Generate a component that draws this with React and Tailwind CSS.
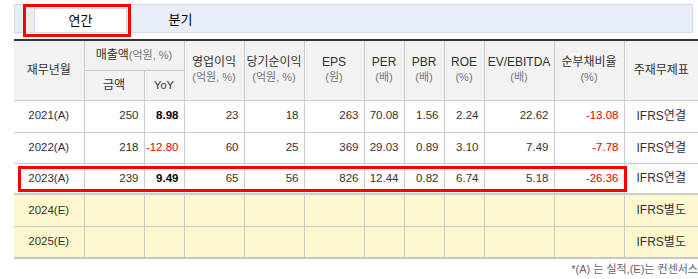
import React from "react";

const cols = [70, 60, 40, 60, 60, 60, 40, 40, 40, 70, 70, 74];

const rows = [
  { period: "2021(A)", sales: "250", yoy: "8.98", op: "23", net: "18", eps: "263", per: "70.08", pbr: "1.56", roe: "2.24", ev: "22.62", debt: "-13.08", kind: "IFRS연결", h: "h-[32px]" },
  { period: "2022(A)", sales: "218", yoy: "-12.80", op: "60", net: "25", eps: "369", per: "29.03", pbr: "0.89", roe: "3.10", ev: "7.49", debt: "-7.78", kind: "IFRS연결", h: "h-[31px]" },
  { period: "2023(A)", sales: "239", yoy: "9.49", op: "65", net: "56", eps: "826", per: "12.44", pbr: "0.82", roe: "6.74", ev: "5.18", debt: "-26.36", kind: "IFRS연결", h: "h-[31px]" },
];

const estimates = ["2024(E)", "2025(E)"];

function Num({ value, bold }) {
  const neg = value.startsWith("-");
  return (
    <td
      className={`border border-[#cccccc] text-right pr-[5px] text-[11.5px] ${
        neg ? "text-[#e60000]" : bold ? "text-black font-bold" : "text-[#333]"
      }`}
    >
      {value}
    </td>
  );
}

function Head({ title, unit, rowSpan = 2 }) {
  return (
    <th rowSpan={rowSpan} className="border border-[#cccccc] font-normal text-[#333] text-[12px] leading-[15px]">
      <div>{title}</div>
      {unit && <div className="text-[11px] text-[#777]">{unit}</div>}
    </th>
  );
}

export default function App() {
  return (
    <div
      className="w-[698px] h-[279px] overflow-hidden bg-white pt-[4px] pl-[14px] relative"
      style={{ fontFamily: "'Liberation Sans', 'Noto Sans CJK KR', sans-serif" }}
    >
      {/* tabs */}
      <div className="w-[679px] h-[29px] bg-[#e8eef8] border border-[#d3dbe8] flex items-end pl-[19px]">
        <div className="w-[93px] h-[24px] bg-white border border-b-0 border-[#cfd8e6] flex items-center justify-center text-[13px] text-black">
          연간
        </div>
        <div className="w-[107px] h-[24px] flex items-center justify-center text-[13px] text-black">분기</div>
      </div>
      <div className="absolute left-[23px] top-[4px] w-[108px] h-[33px] border-[3px] border-[#ff0000]" />

      <div className="relative mt-[6px]">
        <table className="table-fixed border-collapse w-[684px] border-t-2 border-t-[#333]">
          <colgroup>
            {cols.map((w, i) => (
              <col key={i} style={{ width: w }} />
            ))}
          </colgroup>
          <thead className="bg-[#f2f2f2]">
            <tr className="h-[30px]">
              <th rowSpan={2} className="border border-l-0 border-[#cccccc] font-normal text-[#333] text-[12px]">
                재무년월
              </th>
              <th colSpan={2} className="border border-[#cccccc] font-normal text-[#333] text-[12px]">
                매출액<span className="text-[11px] text-[#777]">(억원, %)</span>
              </th>
              <Head title="영업이익" unit="(억원, %)" />
              <Head title="당기순이익" unit="(억원, %)" />
              <Head title="EPS" unit="(원)" />
              <Head title="PER" unit="(배)" />
              <Head title="PBR" unit="(배)" />
              <Head title="ROE" unit="(%)" />
              <Head title="EV/EBITDA" unit="(배)" />
              <Head title="순부채비율" unit="(%)" />
              <th rowSpan={2} className="border border-r-0 border-[#cccccc] font-normal text-[#333] text-[12px]">
                주재무제표
              </th>
            </tr>
            <tr className="h-[30px]">
              <th className="border border-[#cccccc] font-normal text-[#333] text-[12px]">금액</th>
              <th className="border border-[#cccccc] font-normal text-[#333] text-[11px]">YoY</th>
            </tr>
          </thead>
          <tbody>
            {rows.map((r) => (
              <tr key={r.period} className={r.h}>
                <td className="border border-l-0 border-[#cccccc] text-center text-[11.5px] text-[#333]">{r.period}</td>
                <Num value={r.sales} />
                <Num value={r.yoy} bold />
                <Num value={r.op} />
                <Num value={r.net} />
                <Num value={r.eps} />
                <Num value={r.per} />
                <Num value={r.pbr} />
                <Num value={r.roe} />
                <Num value={r.ev} />
                <Num value={r.debt} />
                <td className="border border-r-0 border-[#cccccc] text-center text-[12px] text-[#333]">{r.kind}</td>
              </tr>
            ))}
            {estimates.map((p, i) => (
              <tr
                key={p}
                className={`h-[32px] bg-[#fdf7cf] ${i === 0 ? "border-t-2 border-t-[#cccccc]" : ""} ${
                  i === estimates.length - 1 ? "border-b-2 border-b-[#c8c8c8]" : ""
                }`}
              >
                <td className="border border-l-0 border-[#cccccc] text-center text-[11.5px] text-[#333]">{p}</td>
                {cols.slice(1, -1).map((_, j) => (
                  <td key={j} className="border border-[#cccccc]" />
                ))}
                <td className="border border-r-0 border-[#cccccc] text-center text-[12px] text-[#333]">IFRS별도</td>
              </tr>
            ))}
          </tbody>
        </table>
        <div className="absolute left-[4px] top-[127px] w-[609px] h-[26px] border-[3px] border-[#ff0000]" />
      </div>

      <div className="w-[684px] text-right text-[11px] text-[#666] mt-[2px] whitespace-nowrap">
        *(A) 는 실적,(E)는 컨센서스
      </div>
    </div>
  );
}
